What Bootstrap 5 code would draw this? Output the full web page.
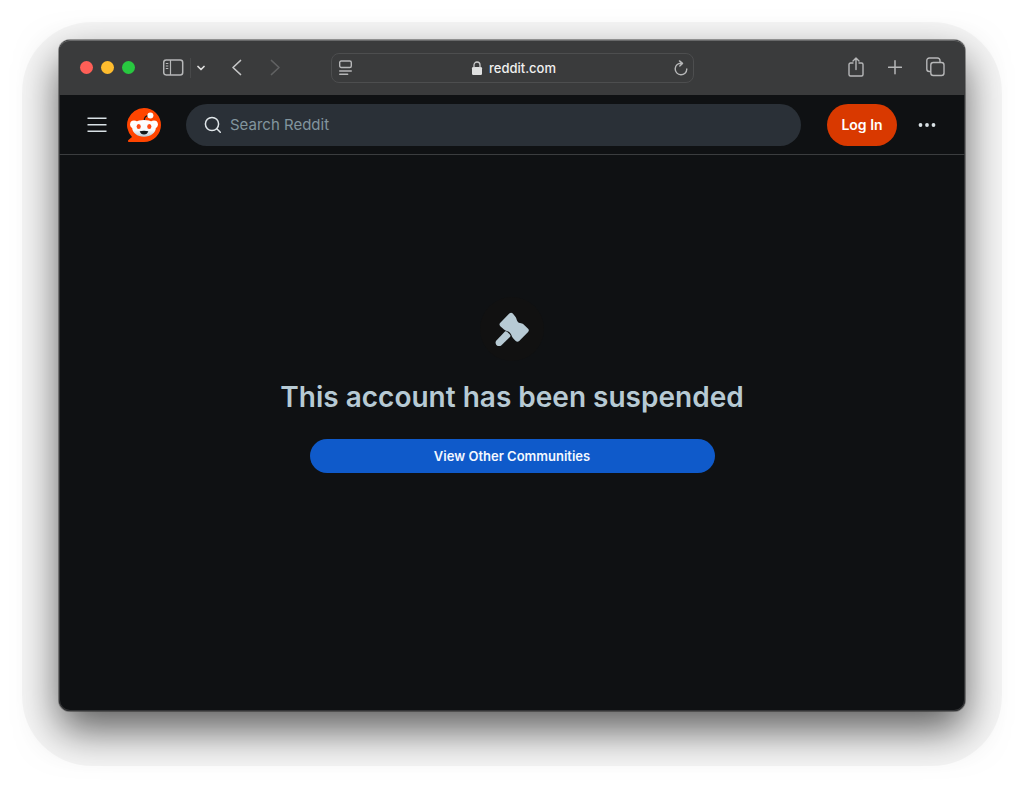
<!DOCTYPE html>
<html lang="en">
<head>
<meta charset="utf-8">
<meta name="viewport" content="width=device-width, initial-scale=1">
<title>reddit.com</title>
<link href="https://cdn.jsdelivr.net/npm/bootstrap@5.3.0/dist/css/bootstrap.min.css" rel="stylesheet">
<style>
  body { font-family: Inter, "Liberation Sans", sans-serif; background: #fff; padding: 40px 59px 78px; }
  svg { display: block; flex: none; }
  .stage { position: relative; z-index: 0; }
  /* outer rim of the window's shadow */
  .stage::before { content: ""; position: absolute; z-index: -1; inset: -18px -37px -55px; border-radius: 70px; background: rgba(0,0,0,.035); }
  .browser { min-height: calc(100vh - 118px); background: #0f1113; border-radius: 11px; overflow: hidden;
    box-shadow: inset 0 0 0 1px #333436, 0 0 0 1px rgba(0,0,0,.35), 0 19px 42px rgba(0,0,0,.62); }
  .toolbar { height: 55px; padding: 0 20px 0 21px; background: #3a3b3c; box-shadow: inset 0 1px 0 #68696a; border-radius: 11px 11px 0 0; }
  .plain { background: none; border: 0; padding: 0; color: #b6b7b8; display: block; }
  .dot { width: 13px; height: 13px; border-radius: 50%; border: 0; padding: 0; }
  .side { flex: 1 1 0; }
  .history { gap: 24px; margin-left: 25px; }
  .address { flex: 0 1 363px; height: 30px; border: 1px solid #4d4e4f; border-radius: 8px; padding: 0 5px 0 7px; }
  .address span { font-size: 13px; line-height: 20px; font-weight: 500; color: #f0f0f0; }
  .host { gap: 6px; }
  .divider { width: 1px; height: 20px; background: #48494a; margin: 0 6px; }
  .site-head { height: 60px; padding: 0 29px 0 28px; border-bottom: 1px solid #3b3d3f; }
  .site-head .plain { color: #d9e1e5; }
  .search { height: 42px; background: #2a3037; color: #e0e6e9; border-radius: 21px; padding: 0 18px; margin: 0 26px 0 25px; }
  .search input { background: none; border: 0; outline: 0; padding: 0; font-size: 15px; line-height: 24px; color: #eef1f3; }
  .search input::placeholder { color: #82959e; opacity: 1; }
  .login { width: 70px; height: 42px; border-radius: 21px; border: 0; padding: 0; background: #d93900; color: #fff; font-size: 14px; font-weight: 600; margin-right: 21px; }
  .login:hover { background: #c23300; color: #fff; }
  .notice { padding: 142px 24px 24px; }
  .emblem { width: 64px; height: 64px; border-radius: 50%; background: #111111; }
  .notice h1 { font-size: 28px; line-height: 36px; font-weight: 600; color: #b7cad4; margin: 18px 0 24px; }
  .explore { width: 100%; max-width: 405px; height: 34px; border-radius: 17px; background: #0f5aca; color: #f4f8ff; font-size: 13px; line-height: 34px; font-weight: 600; padding: 0; border: 0; }
  .explore:hover { background: #0c4cab; color: #fff; }
</style>
</head>
<body>
<div class="stage">
<div class="browser">
  <div class="toolbar d-flex align-items-center">
    <div class="side d-flex align-items-center">
      <div class="d-flex gap-2">
        <button class="dot" style="background:#ff5f57" aria-label="Close"></button>
        <button class="dot" style="background:#febc2e" aria-label="Minimize"></button>
        <button class="dot" style="background:#28c840" aria-label="Zoom"></button>
      </div>
      <button class="plain ms-4 ps-1" aria-label="Sidebar">
        <svg width="21" height="18" viewBox="0 0 21 18" fill="none" stroke="currentColor" stroke-width="1.5"><rect x=".7" y="1" width="19" height="15" rx="2.500"/><path d="M7.500 1v15M2.800 4.500h2.500M2.800 7h2.500M2.800 9.500h2.500" stroke-width="1.200"/></svg>
      </button>
      <div class="divider"></div>
      <button class="plain" aria-label="Tab groups">
        <svg width="8" height="8" viewBox="0 0 8 8" fill="none" stroke="#dedede" stroke-width="1.700" stroke-linecap="round" stroke-linejoin="round"><path d="M1 2.500l3 3 3-3"/></svg>
      </button>
      <div class="history d-flex">
        <button class="plain" aria-label="Back">
          <svg width="14" height="18" viewBox="0 0 14 18" fill="none" stroke="#c4c5c6" stroke-width="1.700" stroke-linecap="round" stroke-linejoin="round"><path d="M10.500 1.500L3 8.500l7.500 7"/></svg>
        </button>
        <button class="plain" aria-label="Forward">
          <svg width="14" height="18" viewBox="0 0 14 18" fill="none" stroke="#606162" stroke-width="1.700" stroke-linecap="round" stroke-linejoin="round"><path d="M3.500 1.500L11 8.500l-7.500 7"/></svg>
        </button>
      </div>
    </div>
    <div class="address d-flex align-items-center justify-content-between">
      <button class="plain" aria-label="Reader">
        <svg width="14" height="16" viewBox="0 0 14 16" fill="none" stroke="currentColor" stroke-width="1.400" stroke-linecap="round"><rect x=".7" y="1" width="11.600" height="6.500" rx="1.500"/><path d="M.7 11h11.600M.7 14.300h8"/></svg>
      </button>
      <div class="host d-flex align-items-center">
        <svg width="12" height="14" viewBox="0 0 12 14"><rect x="1" y="6" width="10" height="8" rx="1.300" fill="#dfe0e0"/><path d="M3 6.500V4a3 3 0 016 0v2.500" fill="none" stroke="#c8c9c9" stroke-width="1.300"/></svg>
        <span>reddit.com</span>
      </div>
      <button class="plain" aria-label="Reload">
        <svg width="14" height="16" viewBox="0 0 14 16" fill="none" stroke="currentColor" stroke-width="1.400" stroke-linecap="round" stroke-linejoin="round"><path d="M7.500 3.200A5.800 5.800 0 1012.800 9M5.500.900l3 2.500-2.700 2.700"/></svg>
      </button>
    </div>
    <div class="side d-flex align-items-center justify-content-end gap-4">
      <button class="plain" aria-label="Share">
        <svg width="16" height="22" viewBox="0 0 16 22" fill="none" stroke="currentColor" stroke-width="1.400" stroke-linecap="round" stroke-linejoin="round"><path d="M5 6H2.500C1.600 6 1 6.600 1 7.500v10c0 .900.600 1.500 1.500 1.500h11c.900 0 1.500-.600 1.500-1.500v-10c0-.900-.600-1.500-1.500-1.500H11M8 12.500V1M5 4l3-3 3 3"/></svg>
      </button>
      <button class="plain" aria-label="New tab">
        <svg width="14" height="16" viewBox="0 0 14 16" fill="none" stroke="currentColor" stroke-width="1.500" stroke-linecap="round"><path d="M7 .800v13M.500 7.300h13"/></svg>
      </button>
      <button class="plain" aria-label="Show tabs">
        <svg width="19" height="21" viewBox="0 0 19 21" fill="none" stroke="currentColor" stroke-width="1.400"><rect x="4.800" y="5.500" width="13.200" height="13" rx="2.500"/><path d="M4.800 14.500H3.300A2.500 2.500 0 01.800 12V3.500A2.500 2.500 0 013.300 1h8.200A2.500 2.500 0 0114 3.500v2"/></svg>
      </button>
    </div>
  </div>

  <header class="site-head d-flex align-items-center">
    <button class="plain" aria-label="Menu">
      <svg width="20" height="16" viewBox="0 0 20 16" fill="none" stroke="currentColor" stroke-width="1.500"><path d="M.500 1.300h19M.500 7.700h19M.500 14.200h19"/></svg>
    </button>
    <a class="ms-3 ps-1" href="#" aria-label="Reddit home">
      <svg width="34" height="34" viewBox="0 0 34 34">
        <defs><linearGradient id="face" x1="0" y1="0" x2="0" y2="1"><stop offset="0" stop-color="#fff"/><stop offset=".600" stop-color="#f6fbfd"/><stop offset="1" stop-color="#b5c6d0"/></linearGradient></defs>
        <path d="M17 0a17 17 0 0 1 0 34H2.200c-1.200 0-1.600-1.200-.800-2L5 29A17 17 0 0 1 17 0z" fill="#ff4500"/>
        <path d="M17.300 13c-.300-3.500 1.500-5.500 5-5.700" fill="none" stroke="#15191b" stroke-width="1.300"/>
        <circle cx="23.400" cy="7.400" r="3" fill="#fff"/>
        <circle cx="7" cy="16.300" r="3.900" fill="#fff"/><circle cx="27" cy="16.300" r="3.900" fill="#fff"/>
        <path d="M17 12c7.200 0 11.800 3.500 11.800 8s-5 8.700-11.800 8.700S5.200 24.500 5.200 20 9.800 12 17 12z" fill="url(#face)"/>
        <ellipse cx="11.700" cy="18.500" rx="2.100" ry="2.600" fill="#ff4a14"/><ellipse cx="22.300" cy="18.500" rx="2.100" ry="2.600" fill="#ff4a14"/>
        <path d="M12.700 23.200c2.700-.700 5.900-.700 8.600 0-.500 2-2.200 3.300-4.300 3.300s-3.800-1.300-4.300-3.300z" fill="#111719"/>
      </svg>
    </a>
    <label class="search d-flex align-items-center flex-grow-1">
      <svg width="18" height="18" viewBox="0 0 18 18" fill="none" stroke="currentColor" stroke-width="1.500" stroke-linecap="round"><circle cx="8" cy="8" r="6.600"/><path d="M12.800 12.800l3.500 3.500"/></svg>
      <input class="flex-grow-1 ms-2" type="search" placeholder="Search Reddit" aria-label="Search Reddit">
    </label>
    <button class="btn login">Log In</button>
    <button class="plain" aria-label="More">
      <svg width="18" height="6" viewBox="0 0 18 6" fill="currentColor"><circle cx="2.500" cy="3" r="1.900"/><circle cx="9" cy="3" r="1.900"/><circle cx="15.500" cy="3" r="1.900"/></svg>
    </button>
  </header>

  <main class="notice d-flex flex-column align-items-center text-center">
    <div class="emblem d-flex align-items-center justify-content-center">
      <svg width="34" height="34" viewBox="0 0 34 34" fill="#b7cad4"><path d="M14.300 1.600c1.200-1 2.400-1 3.500 0l2.800 3.300c.700 1 .900 2 1.200 3 .500 1.600 1.500 2.700 3.200 3.100 1.500.300 2.500.500 3.400 1.300l4.700 4.500c1 1 1 2.100 0 3.200l-8.900 8.900c-1.100 1.100-2.400 1.100-3.500 0l-2.600-2.600c-.900-1-1.300-2-1.700-3.200-.700-2-1.900-3.300-4-3.900-1.400-.400-2.500-.8-3.400-1.600L5.300 14.200c-1.100-1.100-1.100-2.300 0-3.400z"/><path d="M9.700 19.700c.800-.700 1.700-.600 2.700.300l2.500 2.500c.800.900.800 1.800 0 2.600l-8.700 8.400c-3.300 2.400-7.400-1.600-4.800-4.900z"/></svg>
    </div>
    <h1>This account has been suspended</h1>
    <a href="#" class="btn explore">View Other Communities</a>
  </main>
</div>
</div>
<script src="https://cdn.jsdelivr.net/npm/bootstrap@5.3.0/dist/js/bootstrap.bundle.min.js"></script>
</body>
</html>
